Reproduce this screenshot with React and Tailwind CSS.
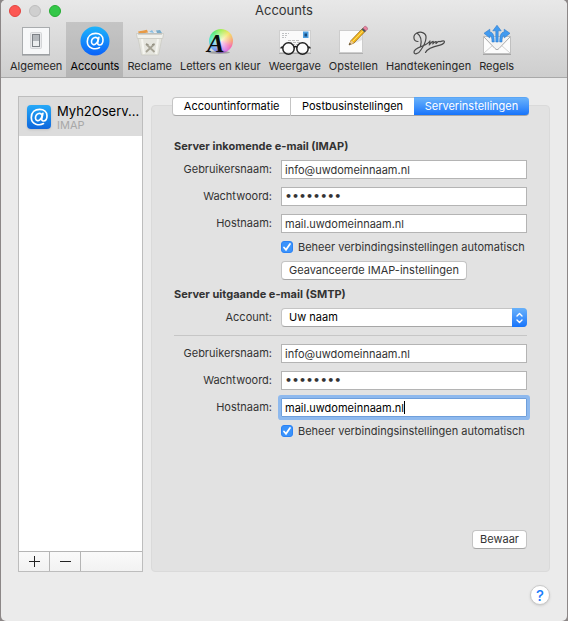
import { useEffect, useRef, useState } from "react";

function SwitchIcon() {
  return (
    <svg width="32" height="32" viewBox="0 0 32 32">
      <rect x="2.5" y="1.5" width="27" height="27" fill="#f7f8f9" stroke="#a9acae" />
      <path d="M2 29h28" stroke="#8f9396" />
      <rect x="10.5" y="6.5" width="11" height="16" rx="1" fill="#e9eaec" stroke="#d3d5d7" />
      <rect x="12.5" y="8.5" width="7" height="12" fill="#eceeef" stroke="#7c8186" />
      <rect x="13" y="9" width="6" height="6" fill="#b4b8bc" />
    </svg>
  );
}

function AtIcon() {
  return (
    <svg width="32" height="32" viewBox="0 0 32 32">
      <defs>
        <linearGradient id="at-blue" x1="0" y1="0" x2="0" y2="1">
          <stop offset="0" stopColor="#1db4fb" />
          <stop offset="1" stopColor="#0a62fa" />
        </linearGradient>
      </defs>
      <circle cx="16" cy="15" r="14.5" fill="url(#at-blue)" />
      <g fill="none" stroke="#fff" strokeWidth="1.6" strokeLinecap="round">
        <path d="M20.5 21.6C16.500 23.800 8.300 23 8.300 15.500C8.300 10.300 12 7.400 16.700 7.400C21 7.400 24 10 24 13.800C24 17.200 22.200 19 20.500 19C18.800 19 18.500 17.700 18.800 16.300L19.900 11.300" />
        <path d="M19.300 13.500C18.600 11.700 17.200 11.100 15.800 11.500C13.400 12.200 12.400 14.500 12.500 16.300C12.700 18.700 15 19.300 16.700 17.900C17.900 16.900 18.700 15.700 19.100 14" />
      </g>
    </svg>
  );
}

function TrashIcon() {
  return (
    <svg width="32" height="32" viewBox="0 0 32 32">
      <path d="M3.500 8L4 5.500L11 4L14 7L17 4.500L21 6L24 4L28 6V9H3.500Z" fill="#e8edf1" />
      <path d="M4 5.500L13 3.800L14 6.500L5 8Z" fill="#e79a45" />
      <path d="M15 6L18 4L20 7Z" fill="#88bde0" />
      <path d="M22 4.500L26 4L28 7L23 7Z" fill="#79abc9" />
      <path d="M4 12L7.500 29H24.500L28 12Z" fill="#e5e5de" stroke="#c8c8c2" strokeWidth=".7" />
      <path d="M8 13L10 28M24 13L22 28" stroke="#f5f5f0" strokeWidth="2" />
      <path d="M2.500 7.500H29.500L28.700 12.500H3.300Z" fill="#f1f1ec" stroke="#c4c4bd" strokeWidth=".7" />
      <path d="M4 8H28" stroke="#a4a8a4" strokeWidth=".8" />
      <path d="M12 18L20.500 26M20.500 18L12 26" stroke="#a5a294" strokeWidth="1.8" />
      <path d="M14.500 18.500L12 18M18 18.500L20.500 18" stroke="#8f8c7e" />
    </svg>
  );
}

function FontsIcon() {
  return (
    <span className="relative block size-8">
      <span className="absolute top-[3px] left-[5px] size-6 rounded-full bg-[radial-gradient(circle,#ffffffcc,#ffffff00_65%),conic-gradient(#a5ef5a,#f3e46a_45deg,#f8a27a_90deg,#f56fb0_120deg,#d77bea_155deg,#7d76ee_200deg,#66b9ee_240deg,#58e8c9_280deg,#5de879_320deg,#a5ef5a)]" />
      <svg className="absolute inset-0" width="32" height="32" viewBox="0 0 32 32">
        <ellipse cx="15" cy="26.500" rx="11" ry="1.500" fill="#000" opacity=".25" />
        <text
          x="3"
          y="26"
          fontFamily="Liberation Serif, serif"
          fontSize="26"
          fontWeight="bold"
          fontStyle="italic"
          fill="#0b0b0b"
        >
          A
        </text>
      </svg>
    </span>
  );
}

function GlassesIcon() {
  return (
    <svg width="32" height="32" viewBox="0 0 32 32">
      <rect x=".5" y="4.500" width="31" height="22" fill="#fafafa" stroke="#cfcfcf" />
      <path d="M0 27.500H32" stroke="#a9a9a9" />
      <path d="M3 7.500H10M3 9.500H9M3 11.500H7" stroke="#bfc1c3" strokeDasharray="2 1" />
      <path d="M9 14.500H20M10 16.500H21M13 18.500H20" stroke="#bfbfbf" strokeDasharray="3 1" />
      <rect x="24" y="5.500" width="5.500" height="6.500" fill="#4e9fe0" />
      <rect x="25.500" y="7.500" width="2.500" height="3" fill="#174d80" />
      <g fill="#ffffff66" stroke="#222" strokeWidth="1.500">
        <circle cx="9.500" cy="22.500" r="5.700" />
        <circle cx="23.500" cy="22.500" r="5.700" />
        <path d="M15 21.500C16 20 17 20 18 21.500M2 22.500C2 21.500 3 21 4 21M31 22.500C31 21.500 30 21 29 21" fill="none" />
      </g>
    </svg>
  );
}

function ComposeIcon() {
  return (
    <svg className="overflow-visible" width="32" height="32" viewBox="0 0 32 32">
      <rect x="2.500" y="4.500" width="23" height="22" fill="#fcfcfc" stroke="#cdcdcd" />
      <path d="M2 27.500H26" stroke="#b0b0b0" />
      <path d="M14 19L25 14V10Z" fill="#000" opacity=".1" />
      <path d="M12 19L14 14.500L25.500 2.500L28.500 5L17 17Z" fill="#f4b91c" stroke="#8a5a10" strokeWidth=".7" />
      <path d="M15.500 15.500L27 3.800" stroke="#fde06b" />
      <path d="M12 19L14 14.500L17 17Z" fill="#e9c893" />
      <path d="M12 19L12.800 17L14 18Z" fill="#222" />
      <path d="M24.500 3.500L27.500 6.300L29 4.800L26 2Z" fill="#4a5a63" />
      <path d="M26 2L27.500 .500C28.500 -.500 31.500 2 30.300 3.500L29 4.800Z" fill="#e883a0" stroke="#9a4b62" strokeWidth=".5" />
    </svg>
  );
}

function SignatureIcon() {
  return (
    <svg width="34" height="32" viewBox="0 0 34 32">
      <g fill="none" stroke="#4a4a4a" strokeWidth="1.200" strokeLinecap="round" strokeLinejoin="round">
        <path d="M6 15.500C1 15.500 .500 9 5 7C9 5 14.500 7 14 12C13.700 16.500 11 21 8.500 24.500C6.500 28 2 29 2 26C2 23 7 21.500 10.500 20C14 18.500 17 17 18 15L17.300 19C18.500 17.500 20.300 15 21.300 15.500L20.800 18C22 16.500 23.800 15 24.300 15.700L24 17.500C25.500 16 26.500 15 27.300 15.500C28.500 16 29.500 14.500 32 15C33.500 16 31 18.500 28 19.200C22 20.500 15.500 22 13.500 26.500" />
        <path d="M5 7C9 10 10 15 8.500 20.500" />
      </g>
    </svg>
  );
}

function RulesIcon() {
  return (
    <svg className="overflow-visible" width="32" height="32" viewBox="0 0 32 32">
      <rect x="2.500" y="10.500" width="27" height="17" fill="#fcfcfc" stroke="#c0c0c0" />
      <path d="M2 28.500H30" stroke="#a6a6a6" />
      <path d="M3 27L12 19M29 27L20 19" stroke="#d2d2d2" />
      <path d="M3 11L14 22.500C15.500 24 16.500 24 18 22.500L29 11" fill="#f4f4f4" stroke="#ababab" />
      <g fill="#429bf0" stroke="#2271c4" strokeWidth=".5">
        <path d="M14.800 16V4.800H11.800L16 -.800L20.200 4.800H17.200V16Z" />
        <path d="M11 16C11 12 10.300 10 8.800 9.500V12L3 7.300L8.800 3.200V6C12.300 6.300 13.300 10 13.300 16Z" />
        <path d="M21 16C21 12 21.700 10 23.200 9.500V12L29 7.300L23.200 3.200V6C19.700 6.300 18.700 10 18.700 16Z" />
      </g>
    </svg>
  );
}

const TOOLBAR = [
  { label: "Algemeen", icon: SwitchIcon },
  { label: "Accounts", icon: AtIcon, active: true },
  { label: "Reclame", icon: TrashIcon },
  { label: "Letters en kleur", icon: FontsIcon },
  { label: "Weergave", icon: GlassesIcon },
  { label: "Opstellen", icon: ComposeIcon },
  { label: "Handtekeningen", icon: SignatureIcon },
  { label: "Regels", icon: RulesIcon },
];

const TABS = ["Accountinformatie", "Postbusinstellingen", "Serverinstellingen"];

function Toolbar() {
  return (
    <header className="border-b border-[#a9a9a9] bg-linear-to-b from-[#e8e8e8] to-[#cecece]">
      <div className="grid h-[22px] grid-cols-[1fr_auto_1fr] items-center px-2">
        <div className="flex gap-2">
          <button aria-label="Sluit" className="size-3 rounded-full border border-[#e2443f] bg-[#fc5753]" />
          <button aria-label="Minimaliseer" className="size-3 rounded-full border border-[#bdbdbd] bg-[#cfcfcf]" />
          <button aria-label="Zoom" className="size-3 rounded-full border border-[#24ac32] bg-[#33c748]" />
        </div>
        <h1 className="text-[13px] text-[#333]">Accounts</h1>
      </div>
      <nav className="flex pl-[5px]">
        {TOOLBAR.map(({ label, icon: Icon, active }) => (
          <button
            key={label}
            className={`flex h-[55px] flex-col items-center px-1 pt-1 leading-4 whitespace-nowrap ${
              active ? "bg-black/12 text-black" : "text-[#262626]"
            }`}
          >
            <Icon />
            <span>{label}</span>
          </button>
        ))}
      </nav>
    </header>
  );
}

function Sidebar() {
  return (
    <aside className="flex w-[125px] shrink-0 flex-col border border-[#bdbdbd] bg-white">
      <button className="flex h-[39px] items-center gap-[6px] bg-[#dcdcdc] pl-2 text-left">
        <span className="flex size-6 shrink-0 rounded bg-linear-to-b from-[#27a9f8] to-[#1166dc] shadow-sm">
          <svg width="24" height="24" viewBox="4 3 24 24" fill="none" stroke="#fff" strokeWidth="1.700" strokeLinecap="round">
            <path d="M20.500 21.600C16.500 23.800 8.300 23 8.300 15.500C8.300 10.300 12 7.400 16.700 7.400C21 7.400 24 10 24 13.800C24 17.200 22.200 19 20.500 19C18.800 19 18.500 17.700 18.800 16.300L19.900 11.300" />
            <path d="M19.300 13.500C18.600 11.700 17.200 11.100 15.800 11.500C13.400 12.200 12.400 14.500 12.500 16.300C12.700 18.700 15 19.300 16.700 17.900C17.900 16.900 18.700 15.700 19.100 14" />
          </svg>
        </span>
        <span className="whitespace-nowrap">
          <span className="block text-[13px] leading-4 text-black">Myh2Oserv...</span>
          <span className="block text-[11px] leading-3 text-[#a8a8a8]">IMAP</span>
        </span>
      </button>
      <div className="mt-auto grid h-5 grid-cols-[31px_31px_1fr] border-t border-[#b5b5b5] bg-linear-to-b from-[#fafafa] to-[#f2f2f2]">
        <button aria-label="Voeg toe" className="grid place-items-center border-r border-[#b5b5b5]">
          <svg width="11" height="11" stroke="#222">
            <path d="M0 5.500H11M5.500 0V11" />
          </svg>
        </button>
        <button aria-label="Verwijder" className="grid place-items-center border-r border-[#b5b5b5]">
          <svg width="11" height="11" stroke="#222">
            <path d="M0 5.500H11" />
          </svg>
        </button>
      </div>
    </aside>
  );
}

function Row({ id, label, children }) {
  return (
    <div className="grid h-[19px] grid-cols-[98px_1fr] items-center gap-[9px]">
      <label htmlFor={id} className="text-right">
        {label}
      </label>
      {children}
    </div>
  );
}

function Field({ id, label, type = "text", value: initial, focused }) {
  const ref = useRef(null);
  const [value, setValue] = useState(initial);
  const [caret, setCaret] = useState(0);

  // steady caret after the last character
  useEffect(() => {
    if (!focused) return;
    const style = getComputedStyle(ref.current);
    const ctx = document.createElement("canvas").getContext("2d");
    ctx.font = `${style.fontSize} ${style.fontFamily}`;
    setCaret(Math.round(ctx.measureText(value).width) + 4);
  }, [value, focused]);

  return (
    <Row id={id} label={label}>
      <div className="relative">
        <input
          ref={ref}
          id={id}
          type={type}
          value={value}
          onChange={(e) => setValue(e.target.value)}
          autoFocus={focused}
          spellCheck={false}
          className={`block h-[19px] w-full min-w-0 border bg-white px-[3px] outline-none ${
            type === "password" ? "font-['DejaVu_Sans',sans-serif] font-bold" : ""
          } ${
            focused
              ? "rounded-[1px] border-[#6f9fdb] text-black caret-transparent ring-3 ring-[#8eb9ee]"
              : "border-[#b4b4b4]"
          }`}
        />
        {focused && (
          <span className="pointer-events-none absolute inset-y-[3px] w-px bg-black" style={{ left: caret }} />
        )}
      </div>
    </Row>
  );
}

function AutoCheck({ id }) {
  return (
    <div className="flex h-3 items-center gap-[5px] pl-[107px]">
      <span className="relative size-3 shrink-0">
        <input
          id={id}
          type="checkbox"
          defaultChecked
          className="peer block size-3 appearance-none rounded-[3px] border border-[#b4b4b4] bg-white checked:border-[#2b83f6] checked:bg-[#3b93fb]"
        />
        <svg
          className="pointer-events-none absolute inset-0 hidden peer-checked:block"
          width="12"
          height="12"
          fill="none"
          stroke="#fff"
          strokeWidth="1.800"
          strokeLinecap="round"
        >
          <path d="M3 6.500L5 8.800L9 3" />
        </svg>
      </span>
      <label htmlFor={id} className="whitespace-nowrap">
        Beheer verbindingsinstellingen automatisch
      </label>
    </div>
  );
}

const pushButton =
  "h-[19px] rounded-[4px] border border-[#c4c4c4] border-b-[#a6a6a6] bg-white px-[7px] whitespace-nowrap";

function ServerSettings() {
  return (
    <form className="flex flex-1 flex-col gap-2 px-[22px] pt-6 pb-[22px]" onSubmit={(e) => e.preventDefault()}>
      <h2 className="h-3 leading-3 font-bold">Server inkomende e-mail (IMAP)</h2>
      <Field id="imap-user" label="Gebruikersnaam:" value="info@uwdomeinnaam.nl" />
      <Field id="imap-pass" label="Wachtwoord:" type="password" value="geheim12" />
      <Field id="imap-host" label="Hostnaam:" value="mail.uwdomeinnaam.nl" />
      <AutoCheck id="imap-auto" />
      <div className="flex pl-[107px]">
        <button type="button" className={pushButton}>
          Geavanceerde IMAP-instellingen
        </button>
      </div>

      <h2 className="h-3 leading-3 font-bold">Server uitgaande e-mail (SMTP)</h2>
      <Row id="smtp-account" label="Account:">
        <div className="relative">
          <select
            id="smtp-account"
            className="block h-[19px] w-full appearance-none rounded-[4px] border border-[#c4c4c4] border-b-[#a6a6a6] bg-white px-[7px] text-black"
          >
            <option>Uw naam</option>
          </select>
          <span className="pointer-events-none absolute inset-y-0 right-0 grid w-[15px] place-items-center rounded-r-[4px] bg-linear-to-b from-[#68b1fa] to-[#1473fb]">
            <svg width="9" height="12" fill="none" stroke="#fff" strokeWidth="1.400" strokeLinecap="round" strokeLinejoin="round">
              <path d="M2 4L4.500 1.500L7 4M2 8L4.500 10.500L7 8" />
            </svg>
          </span>
        </div>
      </Row>
      <hr className="border-[#c6c6c6]" />
      <Field id="smtp-user" label="Gebruikersnaam:" value="info@uwdomeinnaam.nl" />
      <Field id="smtp-pass" label="Wachtwoord:" type="password" value="geheim12" />
      <Field id="smtp-host" label="Hostnaam:" value="mail.uwdomeinnaam.nl" focused />
      <AutoCheck id="smtp-auto" />

      <div className="mt-auto flex justify-end">
        <button type="submit" className={pushButton}>
          Bewaar
        </button>
      </div>
    </form>
  );
}

export default function App() {
  const [tab, setTab] = useState("Serverinstellingen");

  return (
    <div className="min-h-screen bg-[#8c8787] px-px font-['Inter',sans-serif] text-[11px] text-[#333] antialiased">
      <div className="flex min-h-screen flex-col overflow-hidden rounded-[5px] bg-[#ebebeb]">
        <Toolbar />

        <main className="flex flex-1 gap-2 px-[17px] pt-[18px]">
          <Sidebar />

          <section className="mt-[9px] flex min-w-0 flex-1 flex-col rounded-[4px] border border-[#dadada] bg-[#e2e2e2]">
            <div role="tablist" className="-mt-[9px] flex h-[19px] px-5">
              {TABS.map((name) => (
                <button
                  key={name}
                  role="tab"
                  aria-selected={tab === name}
                  onClick={() => setTab(name)}
                  className={`flex-auto border-y border-[#c4c4c4] border-b-[#a6a6a6] whitespace-nowrap first:rounded-l-[4px] first:border-x last:rounded-r-[4px] ${
                    tab === name
                      ? "border-t-[#5aa5f5] border-b-[#1a68dc] bg-linear-to-b from-[#68b1fa] to-[#1473fb] text-white"
                      : "bg-white text-black"
                  }`}
                >
                  {name}
                </button>
              ))}
            </div>
            <ServerSettings />
          </section>
        </main>

        <footer className="flex h-[49px] items-start justify-end px-[17px] pt-[13px]">
          <button
            aria-label="Help"
            className="size-5 rounded-full border border-[#c9c9c9] bg-white text-[15px] leading-none font-medium text-[#1a7dfb] shadow-sm"
          >
            ?
          </button>
        </footer>
      </div>
    </div>
  );
}
